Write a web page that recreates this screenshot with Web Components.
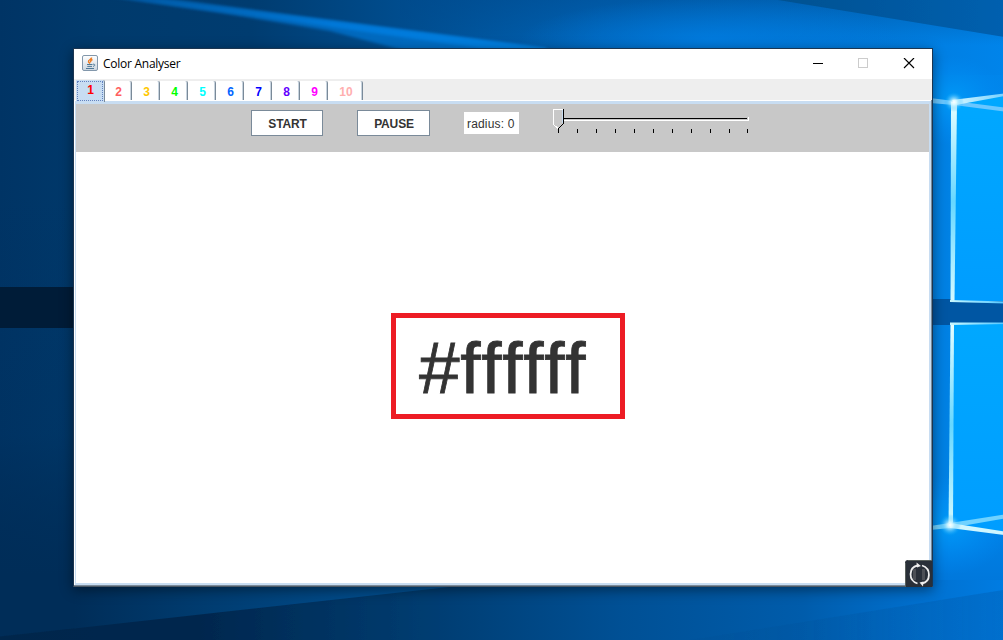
<!DOCTYPE html>
<html lang="en"><head><meta charset="utf-8"><title>Color Analyser</title>
<style>html,body{margin:0;width:1003px;height:640px;overflow:hidden}body{font-family:"Liberation Sans",Arial,sans-serif}</style></head>
<body>
<desktop-screen>
 <app-window>
  <title-bar slot="title">Color Analyser</title-bar>
  <tab-strip slot="tabs">
   <color-tab selected style="color:#f00">1</color-tab><color-tab style="color:#ff5f5f">2</color-tab><color-tab style="color:#ffc800">3</color-tab><color-tab style="color:#0f0">4</color-tab><color-tab style="color:#0ff">5</color-tab><color-tab style="color:#0064ff">6</color-tab><color-tab style="color:#00f">7</color-tab><color-tab style="color:#6400ff">8</color-tab><color-tab style="color:#f0f">9</color-tab><color-tab wide style="color:#ffafaf">10</color-tab>
  </tab-strip>
  <tool-bar slot="tools"><push-button style="width:72px;margin-right:34px">START</push-button><push-button style="width:73px;margin-right:34px">PAUSE</push-button><value-label>radius: 0</value-label><radius-slider></radius-slider></tool-bar>
  <color-readout>#ffffff</color-readout>
 </app-window>
</desktop-screen>
<script>
const define=(name,html)=>customElements.define(name,class extends HTMLElement{
 constructor(){super();this.attachShadow({mode:'open'}).innerHTML=html;}
});
define('desk-wallpaper',`<style>:host{display:block;width:1003px;height:640px}svg{display:block}</style>
<svg width="1003" height="640" viewBox="0 0 1003 640">
<defs>
<linearGradient id="base"><stop offset="0" stop-color="#003465"/><stop offset=".1" stop-color="#003a6c"/><stop offset=".5" stop-color="#0057a4"/><stop offset=".75" stop-color="#006bc6"/><stop offset=".93" stop-color="#0080e2"/><stop offset="1" stop-color="#0086ec"/></linearGradient>
<linearGradient id="top" gradientUnits="userSpaceOnUse" x1="0" x2="1003"><stop offset="0" stop-color="#003465"/><stop offset=".1" stop-color="#003a6c"/><stop offset=".25" stop-color="#003c70"/><stop offset=".42" stop-color="#004f92"/><stop offset=".6" stop-color="#0064b8"/><stop offset=".75" stop-color="#0072cf"/><stop offset=".9" stop-color="#007de0"/><stop offset="1" stop-color="#0084ea"/></linearGradient>
<linearGradient id="topshade" x2="0" y2="1"><stop offset="0" stop-color="#00488a" stop-opacity=".45"/><stop offset="1" stop-color="#00488a" stop-opacity="0"/></linearGradient>
<linearGradient id="corner"><stop offset="0" stop-color="#00508f"/><stop offset="1" stop-color="#0060b0"/></linearGradient>
<linearGradient id="beam"><stop offset="0" stop-color="#005ca9"/><stop offset=".5" stop-color="#007ee2"/><stop offset="1" stop-color="#0085e9"/></linearGradient>
<linearGradient id="low" gradientUnits="userSpaceOnUse" x1="0" x2="1003"><stop offset="0" stop-color="#00264c"/><stop offset=".2" stop-color="#00274e"/><stop offset=".42" stop-color="#003c70"/><stop offset=".62" stop-color="#005095"/><stop offset=".8" stop-color="#005cab"/><stop offset=".92" stop-color="#0070cf"/><stop offset="1" stop-color="#007ce2"/></linearGradient>
<linearGradient id="lowleft"><stop offset="0" stop-color="#002d58"/><stop offset=".3" stop-color="#003c70"/><stop offset=".65" stop-color="#004b8a"/><stop offset="1" stop-color="#005ba8"/></linearGradient>
<linearGradient id="leftdark" x2="0" y2="1"><stop offset="0" stop-color="#002850" stop-opacity="0"/><stop offset=".3" stop-color="#002850" stop-opacity="0"/><stop offset=".68" stop-color="#002850" stop-opacity=".15"/><stop offset=".9" stop-color="#002d58" stop-opacity="1"/></linearGradient>
<linearGradient id="rightlow" x2="0" y2="1"><stop offset="0" stop-color="#0086ec"/><stop offset="1" stop-color="#0078dc"/></linearGradient>
<linearGradient id="lowshade"><stop offset="0" stop-color="#004a8c" stop-opacity=".15"/><stop offset="1" stop-color="#0058a8" stop-opacity=".35"/></linearGradient>
<linearGradient id="pane" x2="0" y2="1"><stop offset="0" stop-color="#00a8ff"/><stop offset="1" stop-color="#009dff"/></linearGradient>
<linearGradient id="edge" x2="0" y2="1"><stop offset="0" stop-color="#e8ffff"/><stop offset=".5" stop-color="#66d7ff"/><stop offset="1" stop-color="#d5faff"/></linearGradient>
<linearGradient id="hline"><stop offset="0" stop-color="#c8f8ff"/><stop offset="1" stop-color="#4cc4ff"/></linearGradient>
<linearGradient id="ray"><stop offset="0" stop-color="#d8f8ff"/><stop offset="1" stop-color="#70ceff"/></linearGradient>
<radialGradient id="glow"><stop offset="0" stop-color="#fff"/><stop offset=".25" stop-color="#d8f8ff" stop-opacity=".8"/><stop offset="1" stop-color="#00a8ff" stop-opacity="0"/></radialGradient>
<radialGradient id="halo"><stop offset="0" stop-color="#00a5ff" stop-opacity=".7"/><stop offset="1" stop-color="#0090ff" stop-opacity="0"/></radialGradient>
<radialGradient id="soft"><stop offset="0" stop-color="#0082ea" stop-opacity=".65"/><stop offset="1" stop-color="#0082ea" stop-opacity="0"/></radialGradient>
<filter id="b1" x="-10%" y="-10%" width="120%" height="120%"><feGaussianBlur stdDeviation=".7"/></filter>
<filter id="b3" x="-10%" y="-30%" width="120%" height="160%"><feGaussianBlur stdDeviation="1.800"/></filter>
</defs>
<rect width="1003" height="640" fill="url(#base)"/>
<rect width="1003" height="75" fill="url(#top)"/>
<rect x="400" width="603" height="45" fill="url(#topshade)"/>
<ellipse cx="710" cy="40" rx="190" ry="42" fill="url(#soft)"/>
<path d="M778 0L1010 38V-5H765Z" fill="url(#corner)" filter="url(#b1)"/>
<path d="M102-4L150-4L545 48L560 60L440 60L330 31L220 13Z" fill="url(#beam)" opacity=".6" filter="url(#b3)"/>
<path d="M120-2L160-1L545 48L550 52L480 48L330 27Z" fill="url(#beam)" opacity=".75" filter="url(#b3)"/>
<rect width="74" height="640" fill="url(#leftdark)"/>
<rect x="-5" y="287" width="95" height="41" fill="#001a38" filter="url(#b1)"/>
<rect x="925" y="500" width="78" height="80" fill="url(#rightlow)"/>
<rect x="74" y="580" width="929" height="60" fill="url(#low)"/>
<path d="M-5 637L440 588V660H-5Z" fill="url(#low)" filter="url(#b1)"/>
<path d="M74 580H512L440 588L74 628.500Z" fill="url(#lowleft)"/>
<path d="M690 640L1003 590V640Z" fill="url(#lowshade)" filter="url(#b1)"/>
<ellipse cx="950" cy="525" rx="60" ry="50" fill="url(#halo)"/>
<ellipse cx="954" cy="101" rx="50" ry="45" fill="url(#halo)"/>
<rect x="928" y="299" width="80" height="26" fill="#0057a3" filter="url(#b1)"/>
<path d="M954 102L1003 96V301H953Z" fill="url(#pane)"/><path d="M952 323H1003V533L950 525Z" fill="url(#pane)"/>
<g filter="url(#b1)">
<path d="M930 98L954 101L1008 108V112L954 105L930 103Z" fill="#6ac7ff"/>
<path d="M952 100L1008 93V95.500L956 105Z" fill="url(#ray)"/>
<path d="M951 102H957L954.500 302H950.500Z" fill="url(#edge)"/><path d="M950.500 323H954L953 527H948.500Z" fill="url(#edge)"/>
<path d="M950 300L1008 301.500V303.500L950 302Z" fill="url(#hline)"/><path d="M950 322.500H1008V324L950 325Z" fill="url(#hline)"/>
<path d="M930 526L950 523L1008 514V518L950 528L930 530Z" fill="#70d2ff"/>
<path d="M950 523L1008 532V535.500L950 528Z" fill="#cff6ff"/>
</g>
<circle cx="954" cy="102" r="10" fill="url(#glow)"/><circle cx="950" cy="525" r="11" fill="url(#glow)"/>
</svg>`);
define('desktop-screen',`<style>:host{display:grid;width:1003px;height:640px;overflow:hidden}desk-wallpaper,.free{grid-area:1/1}.free{position:relative}::slotted(app-window){position:absolute;left:73px;top:48px}sync-badge{position:absolute;left:905px;top:560px}</style><desk-wallpaper></desk-wallpaper><div class="free"><slot></slot><sync-badge></sync-badge></div>`);
define('app-window',`<style>:host{display:flex;flex-direction:column;box-sizing:border-box;width:860px;height:539px;border:1px solid #1c3550;border-bottom-color:#4c5966;background:#fff;box-shadow:0 3px 12px rgba(0,0,0,.45)}
.pane{flex:1;display:flex;flex-direction:column;border-style:solid;border-color:#c8ddf2;border-width:3px 2px 2px 1px;margin:1px 0 0 1px;min-height:0}
.shell{flex:1;display:flex;min-height:0;border-right:1px solid #7a8a99;border-bottom:1px solid #7a8a99}</style>
<slot name="title"></slot><slot name="tabs"></slot><div class="shell"><div class="pane"><slot name="tools"></slot><slot></slot></div></div>`);
define('title-bar',`<style>:host{display:flex;height:30px;align-items:center;padding-left:8px;font:12px "Open Sans","Noto Sans",sans-serif;color:#000}.t{margin-left:5px;flex:1;letter-spacing:-.26px;line-height:16px;white-space:nowrap}svg{display:block}.controls{margin-right:17px}.java{position:relative;top:-1px}</style>
<svg class="java" width="16" height="16" viewBox="0 0 16 16"><defs><linearGradient id="j" x2="0" y2="1"><stop stop-color="#fff"/><stop offset="1" stop-color="#cbd5df"/></linearGradient></defs><rect x=".5" y=".5" width="15" height="15" rx="1.500" fill="url(#j)" stroke="#8297ab"/><path d="M9.600 2.500C9.800 4.300 5.800 4.800 6.500 6.800L8 8.500M10.500 4.500C8.500 5.300 8.200 6.200 9 7.200" fill="none" stroke="#ed7b21" stroke-width="1.400"/><path d="M5 9.500H10.500M5.300 11.400H10M4 13.500H12M11 9.200C13.600 9 13.200 11 11 11.400" fill="none" stroke="#4e7896"/></svg><span class="t"><slot></slot></span>
<svg class="controls" width="102" height="12" viewBox="0 0 102 12"><path d="M0 5.500H10" stroke="#000"/><rect x="45.500" y=".5" width="9" height="9" fill="none" stroke="#ccc"/><path d="M91 0L101 10M101 0L91 10" stroke="#000" stroke-width="1.150"/></svg>`);
define('tab-strip',`<style>:host{display:flex;height:21px;background:#eee;padding-left:2px;box-sizing:border-box}</style><slot></slot>`);
define('color-tab',`<style>:host{display:flex;box-sizing:border-box;width:28px;height:19px;margin-top:2px;background:#fff;border-right:1px solid #7a8a99;align-items:center;justify-content:center;font-weight:bold;font-size:12px;line-height:14px;box-shadow:inset -1px 0 #c8d4df;border-top-right-radius:2px}:host([selected]){width:29px;height:22px;margin-top:1px;background:#c8ddf2;box-shadow:none;position:relative}:host([wide]){width:35px}span{padding:2px 0 0 2px}:host(:nth-child(2)){width:27px}:host(:nth-child(2)) span{padding-left:1px}.f{display:none}:host([selected]) .f{display:block;position:absolute;inset:1px;border:1px dotted #6382bf}:host([selected]) span{padding:0 0 3px 1px}</style><i class="f"></i><span><slot></slot></span>`);
define('tool-bar',`<style>:host{display:flex;flex:none;height:48px;background:#c8c8c8;box-sizing:border-box;padding:6px 0 0 175px;align-items:flex-start}</style><slot></slot>`);
define('push-button',`<style>:host{display:flex;box-sizing:border-box;height:26px;border:1px solid #7a8a99;background:#fff;color:#333;font-size:12px;font-weight:bold;align-items:center;justify-content:center;padding:1px 0 0 1px;letter-spacing:-.15px}</style><span><slot></slot></span>`);
define('value-label',`<style>:host{display:flex;box-sizing:border-box;width:55px;height:22px;margin-top:2px;background:#fff;color:#333;font-size:12px;align-items:center;padding-left:3px;white-space:nowrap;letter-spacing:.16px}span{padding-top:2px}</style><span><slot></slot></span>`);
define('radius-slider',`<style>:host{display:block;margin:-1px 0 0 34px}svg{display:block}</style><svg width="198" height="26" viewBox="0 0 198 26" shape-rendering="crispEdges"><path d="M11 9H194V10H11Z" fill="#000"/><path d="M11 11H195V8H196V12H11Z" fill="#fff"/><path d="M5 20h1v4h-1zM24 20h1v4h-1zM43 20h1v4h-1zM62 20h1v4h-1zM81 20h1v4h-1zM100 20h1v4h-1zM119 20h1v4h-1zM138 20h1v4h-1zM157 20h1v4h-1zM176 20h1v4h-1zM194 20h1v4h-1z"/><path d="M1 1H10V14L6 19H5L1 15Z" fill="#c8c8c8"/><path d="M.5 15V.5H10M.5 15.500L5 19.500" fill="none" stroke="#fff"/><path d="M9.500 1V14" stroke="#c8ddf2"/><path d="M10.500 0V14.500L5.500 19.500V21" fill="none" stroke="#000"/></svg>`);
define('color-readout',`<style>:host{display:flex;flex:1;background:#fff;align-items:center;justify-content:center;min-height:0}.box{box-sizing:border-box;width:234px;height:106px;border:5px solid #ed1c24;display:flex;align-items:center;padding:4px 0 0 23px;margin:0 0 4px 11px;font-size:73px;line-height:86px;color:#333;font-variant-ligatures:none;font-kerning:none;letter-spacing:.7px;-webkit-text-stroke:.8px #333}</style><div class="box"><slot></slot></div>`);
define('sync-badge',`<style>:host{display:block}svg{display:block}</style><svg width="28" height="28" viewBox="0 0 28 28"><path d="M3 0H27V27H0V3Q0 0 3 0Z" fill="#292f38"/><path d="M3 .5H27M.5 3V27" stroke="#59605c" fill="none"/><path d="M11 9H8V20H11ZM17 9H20V20H17Z" fill="#4c4f55"/><path d="M12.500 23.500C3 20.500 3.500 7.500 12.500 5.500M17 5.500C26.500 8.500 26 21.500 17 23.500" fill="none" stroke="#eee" stroke-width="1.800"/><path d="M11.500 2.500L16 6L12 7.500ZM18 26.500L14.500 22.500L18.500 21.500Z" fill="#eee"/></svg>`);
</script></body></html>
